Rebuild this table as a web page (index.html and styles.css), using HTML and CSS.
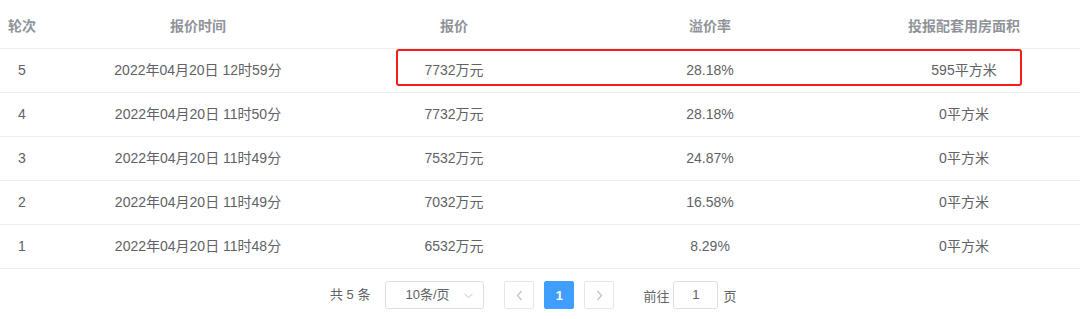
FILE: index.html
```html
<!DOCTYPE html>
<html lang="zh-CN">
<head>
<meta charset="utf-8">
<title>报价记录</title>
<link rel="stylesheet" href="styles.css">
</head>
<body>
<div class="table-wrap">
  <div class="row head">
    <div class="cell">轮次</div>
    <div class="cell">报价时间</div>
    <div class="cell">报价</div>
    <div class="cell">溢价率</div>
    <div class="cell">投报配套用房面积</div>
    <div class="cell"></div>
  </div>
  <div class="row">
    <div class="cell">5</div>
    <div class="cell">2022年04月20日 12时59分</div>
    <div class="cell">7732万元</div>
    <div class="cell">28.18%</div>
    <div class="cell">595平方米</div>
    <div class="cell"></div>
  </div>
  <div class="row">
    <div class="cell">4</div>
    <div class="cell">2022年04月20日 11时50分</div>
    <div class="cell">7732万元</div>
    <div class="cell">28.18%</div>
    <div class="cell">0平方米</div>
    <div class="cell"></div>
  </div>
  <div class="row">
    <div class="cell">3</div>
    <div class="cell">2022年04月20日 11时49分</div>
    <div class="cell">7532万元</div>
    <div class="cell">24.87%</div>
    <div class="cell">0平方米</div>
    <div class="cell"></div>
  </div>
  <div class="row">
    <div class="cell">2</div>
    <div class="cell">2022年04月20日 11时49分</div>
    <div class="cell">7032万元</div>
    <div class="cell">16.58%</div>
    <div class="cell">0平方米</div>
    <div class="cell"></div>
  </div>
  <div class="row last">
    <div class="cell">1</div>
    <div class="cell">2022年04月20日 11时48分</div>
    <div class="cell">6532万元</div>
    <div class="cell">8.29%</div>
    <div class="cell">0平方米</div>
    <div class="cell"></div>
  </div>
  <div class="highlight"></div>
</div>

<div class="pagination">
  <span class="total">共 5 条</span>
  <div class="select">
    <span class="select-text">10条/页</span>
    <svg class="select-arrow" width="9" height="6" viewBox="0 0 9 6"><polyline points="0.5,0.8 4.5,4.8 8.5,0.8" fill="none" stroke="#c0c4cc" stroke-width="1"/></svg>
  </div>
  <div class="pager">
    <button class="btn"><svg width="7" height="11" viewBox="0 0 7 11"><polyline points="5.5,1 1.5,5.5 5.5,10" fill="none" stroke="#c0c4cc" stroke-width="1.3"/></svg></button>
    <button class="btn active">1</button>
    <button class="btn"><svg width="7" height="11" viewBox="0 0 7 11"><polyline points="1.5,1 5.5,5.5 1.5,10" fill="none" stroke="#c0c4cc" stroke-width="1.3"/></svg></button>
  </div>
  <span class="jump">前往</span>
  <div class="jump-input">1</div>
  <span class="jump-unit">页</span>
</div>
</body>
</html>
```

FILE: styles.css
```css
html, body {
  margin: 0;
  padding: 0;
  background: #ffffff;
}

body {
  font-family: "Liberation Sans", "Noto Sans CJK SC", sans-serif;
  color: #606266;
  font-size: 14px;
}

.table-wrap {
  position: relative;
}

.row {
  display: grid;
  grid-template-columns: 44px 308px 204px 308px 200px 1fr;
  height: 43px;
  border-bottom: 1px solid #ebeef5;
  align-items: center;
}

.row.head {
  height: 48px;
  color: #909399;
  font-weight: 700;
  padding-top: 0;
}

.row.head .cell {
  padding-top: 5px;
}

.cell {
  text-align: center;
  white-space: nowrap;
  line-height: 23px;
}

.highlight {
  position: absolute;
  left: 396px;
  top: 49px;
  width: 622px;
  height: 33px;
  border: 2px solid #f51c1c;
  border-radius: 3px;
}

.pagination {
  display: flex;
  align-items: center;
  padding: 12px 0 0 330px;
  font-size: 13px;
  color: #606266;
  height: 28px;
}

.total {
  margin-right: 15px;
  line-height: 28px;
}

.select {
  position: relative;
  box-sizing: border-box;
  width: 99px;
  height: 28px;
  border: 1px solid #dcdfe6;
  border-radius: 3px;
  display: flex;
  align-items: center;
  padding-left: 19px;
}

.select-text {
  line-height: 26px;
}

.select-arrow {
  position: absolute;
  right: 10px;
  top: 11px;
}

.pager {
  display: flex;
  gap: 10px;
  margin-left: 20px;
}

.btn {
  box-sizing: border-box;
  width: 30px;
  height: 28px;
  border: 1px solid #e4e7ed;
  border-radius: 2px;
  background: #ffffff;
  padding: 0;
  margin: 0;
  display: flex;
  align-items: center;
  justify-content: center;
  font-family: "Liberation Sans", "Noto Sans CJK SC", sans-serif;
  font-size: 13px;
  color: #606266;
}

.btn.active {
  background: #409eff;
  border-color: #409eff;
  color: #ffffff;
  font-weight: 700;
}

.jump {
  margin-left: 29px;
  margin-right: 4px;
}

.jump-input {
  box-sizing: border-box;
  width: 45px;
  height: 28px;
  border: 1px solid #dcdfe6;
  border-radius: 3px;
  text-align: center;
  line-height: 26px;
}

.jump-unit {
  margin-left: 5px;
}
```
